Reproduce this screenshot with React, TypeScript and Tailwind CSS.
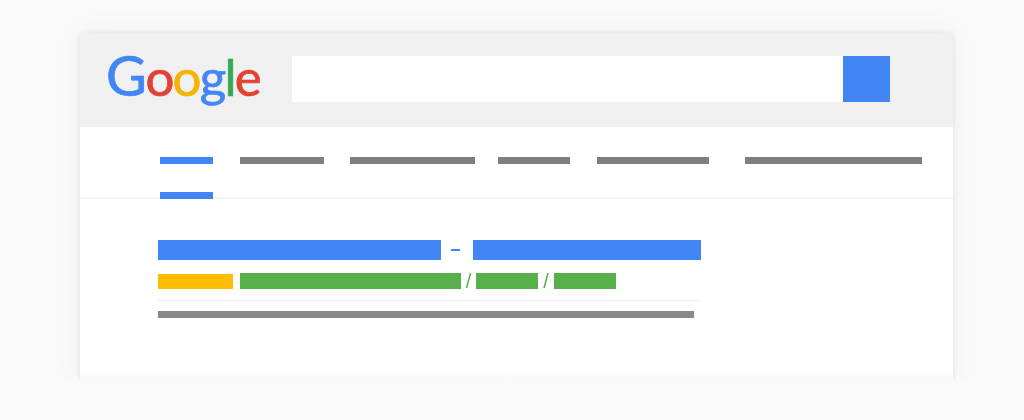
import React from 'react';

const tabs = [
  { id: 'news', className: 'w-[84px] ml-[27px]' },
  { id: 'images', className: 'w-[125px] ml-[26px]' },
  { id: 'videos', className: 'w-[72px] ml-[23px]' },
  { id: 'maps', className: 'w-[112px] ml-[27px]' },
  { id: 'more', className: 'w-[177px] ml-[36px]' },
];

const Logo = () => (
  <div className="flex items-baseline w-[170px] -ml-px font-['Lato',sans-serif] text-[51px] leading-[53px] tracking-[-1.8px] [-webkit-text-stroke:0.7px] blur-[0.4px] select-none">
    <span className="text-[56px] tracking-[-1.5px] text-[#4285f4]">G</span>
    <span className="text-[#e34133]">o</span>
    <span className="text-[#f4b400]">o</span>
    <span className="text-[#4285f4]">g</span>
    <span className="text-[#34a853]">l</span>
    <span className="text-[#e34133]">e</span>
  </div>
);

const App = () => {
  return (
    <div className="h-[420px] w-[1024px] overflow-hidden bg-[#fafafa] flex flex-col font-['Liberation_Sans',sans-serif]">
      <div className="h-[33px] shrink-0" />
      <div className="ml-[80px] mr-[71px] h-[347px] shrink-0 flex flex-col bg-white shadow-[0_0_5px_rgba(0,0,0,0.09),0_0_28px_rgba(0,0,0,0.05)]">
        <header className="h-[94px] shrink-0 bg-[#f0f0f0] flex items-start pl-[27px]">
          <div className="mt-[15px] w-[185px]">
            <Logo />
          </div>
          <div className="mt-[23px] h-[46px] w-[551px] bg-white blur-[0.3px]" />
          <button type="button" className="mt-[23px] h-[46px] w-[47px] bg-[#4285f4] blur-[0.4px]" />
        </header>

        <nav className="h-[72px] shrink-0 border-b-2 border-[#f3f3f3] pl-[80px] pt-[30px]">
          <div className="flex blur-[0.4px]">
            <div className="h-[7px] w-[53px] bg-[#4285f4]" />
            {tabs.map((tab) => (
              <div key={tab.id} className={`h-[7px] bg-[#7f7f7f] ${tab.className}`} />
            ))}
          </div>
          <div className="mt-[28px] h-[7px] w-[53px] bg-[#4285f4] blur-[0.4px]" />
        </nav>

        <section className="flex-1 pl-[78px] pt-[41px] bg-gradient-to-b from-white from-[95%] to-[#f8f8f8]">
          <div className="blur-[0.4px]">
            <div className="flex items-center w-[543px]">
              <div className="h-[20px] w-[283px] bg-[#4285f4]" />
              <div className="h-[2px] w-[9px] ml-[10px] bg-[#4285f4]" />
              <div className="h-[20px] w-[228px] ml-[13px] bg-[#4285f4]" />
            </div>
            <div className="mt-[13px] flex items-center text-[#58b04a] text-[20px] leading-[16px]">
              <div className="h-[15px] w-[75px] bg-[#ffbc05]" />
              <div className="h-[16px] w-[221px] ml-[7px] bg-[#58b04a]" />
              <span className="w-[15px] text-center">/</span>
              <div className="h-[16px] w-[62px] bg-[#58b04a]" />
              <span className="w-[16px] text-center">/</span>
              <div className="h-[16px] w-[62px] bg-[#58b04a]" />
            </div>
            <div className="mt-[11px] h-px w-[543px] bg-[#eeeeee]" />
            <div className="mt-[10px] h-[7px] w-[536px] bg-[#8a8a8a]" />
          </div>
        </section>
      </div>
      <div className="relative flex-1 bg-[#fafafa]" />
    </div>
  );
};

export default App;
